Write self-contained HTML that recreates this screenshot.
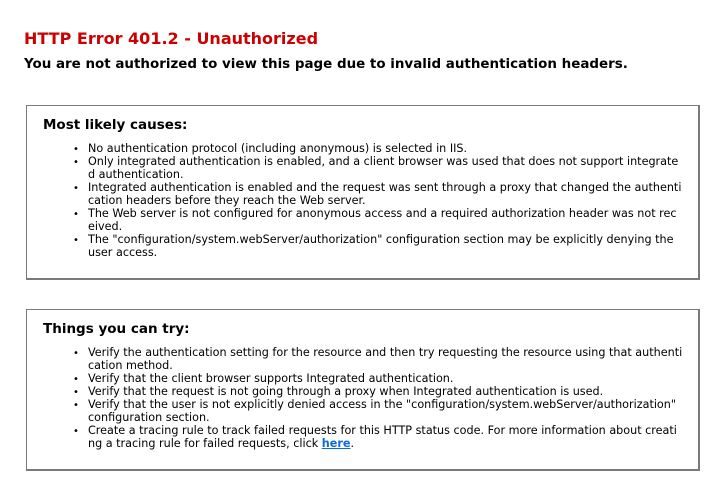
<!DOCTYPE html>
<html><head><meta charset="utf-8"><style>
*{margin:0;padding:0;box-sizing:border-box}
body{width:720px;height:480px;background:#fff;font-family:"DejaVu Sans","Liberation Sans",sans-serif;color:#000;position:relative;overflow:hidden}
.t{position:absolute;left:24px;white-space:nowrap}
h1{font-size:16px;color:#c00;font-weight:bold}
h2{font-size:13.45px;font-weight:bold}
.box{position:absolute;left:26px;width:674px;border:1px solid #7a7a7a;border-right-width:2px;border-bottom-width:2px}
h3{position:absolute;left:16px;font-size:13.5px;font-weight:bold;white-space:nowrap}
ul{position:absolute;left:61px;list-style:none;font-size:11.2px;line-height:13px;white-space:nowrap}
li{position:relative}
li:before{content:"•";position:absolute;left:-15px;top:1px;font-size:10px}
a{color:#0a6cd6;font-weight:bold;text-decoration:underline}
</style></head><body>
<h1 class="t" style="top:29px">HTTP Error 401.2 - Unauthorized</h1>
<h2 class="t" style="top:57px">You are not authorized to view this page due to invalid authentication headers.</h2>
<div class="box" style="top:105px;height:175px">
<h3 style="top:11px">Most likely causes:</h3>
<ul style="top:36px">
<li>No authentication protocol (including anonymous) is selected in IIS.</li>
<li>Only integrated authentication is enabled, and a client browser was used that does not support integrate<br>d authentication.</li>
<li>Integrated authentication is enabled and the request was sent through a proxy that changed the authenti<br>cation headers before they reach the Web server.</li>
<li>The Web server is not configured for anonymous access and a required authorization header was not rec<br>eived.</li>
<li>The "configuration/system.webServer/authorization" configuration section may be explicitly denying the<br>user access.</li>
</ul>
</div>
<div class="box" style="top:309px;height:162px">
<h3 style="top:11px">Things you can try:</h3>
<ul style="top:36px">
<li>Verify the authentication setting for the resource and then try requesting the resource using that authenti<br>cation method.</li>
<li>Verify that the client browser supports Integrated authentication.</li>
<li>Verify that the request is not going through a proxy when Integrated authentication is used.</li>
<li>Verify that the user is not explicitly denied access in the "configuration/system.webServer/authorization"<br>configuration section.</li>
<li>Create a tracing rule to track failed requests for this HTTP status code. For more information about creati<br>ng a tracing rule for failed requests, click <a>here</a>.</li>
</ul>
</div>
</body></html>
